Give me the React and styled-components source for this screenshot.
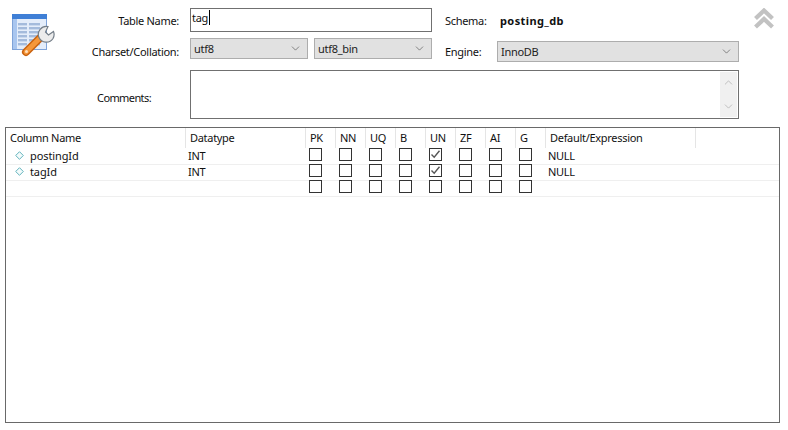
import React from "react";
import styled, { createGlobalStyle } from "styled-components";
import { ChevronDown, ChevronUp } from "lucide-react";

const GlobalStyle = createGlobalStyle`
  html, body {
    margin: 0;
    padding: 0;
    background: #fff;
    font-family: "Noto Sans", Tahoma, sans-serif;
    font-size: 11px;
    letter-spacing: -0.3px;
    color: #111;
  }
`;

const Page = styled.div`
  width: 788px;
  height: 430px;
  box-sizing: border-box;
  padding: 8px 8px 7px 5px;
  display: flex;
  flex-direction: column;
  overflow: hidden;
`;

const Top = styled.div`
  display: grid;
  grid-template-columns: 52px 133px 242px 65px 242px 1fr;
  grid-template-rows: 24px 26px 49px;
  row-gap: 6px;
  height: 111px;
  margin-bottom: 8px;
`;

const IconCell = styled.div`
  grid-row: 1 / span 2;
  padding: 5px 0 0 6px;
`;

const Label = styled.div`
  display: flex;
  align-items: center;
  justify-content: ${(p) => (p.$left ? "flex-start" : "flex-end")};
  padding: ${(p) => (p.$left ? "0 0 0 13px" : "0 11px 0 0")};
  grid-column: ${(p) => p.$col || "auto"};
  white-space: nowrap;
`;

const CommentsLabel = styled(Label)`
  padding: 5px 39px 0 0;
  letter-spacing: -0.6px;
`;

const NameInput = styled.div`
  box-sizing: border-box;
  border: 1px solid #707070;
  height: 24px;
  padding: 1px 0 0 1px;
  line-height: 15px;
  display: flex;
  align-items: flex-start;
`;

const Caret = styled.span`
  width: 1px;
  height: 15px;
  background: #000;
  margin-left: 1px;
`;

const SelectPair = styled.div`
  display: grid;
  grid-template-columns: 118px 118px;
  column-gap: 6px;
  align-items: start;
`;

const SelectBox = styled.div`
  box-sizing: border-box;
  height: 21px;
  border: 1px solid #adadad;
  background: #e1e1e1;
  display: flex;
  align-items: center;
  justify-content: space-between;
  padding: 0 5px 0 3px;
  margin-top: ${(p) => (p.$low ? "3px" : "0")};
  color: #222;
`;

const SchemaValue = styled.div`
  display: flex;
  align-items: center;
  padding-left: 3px;
  font-weight: 700;
  letter-spacing: 0.4px;
`;

const Comments = styled.div`
  grid-column: 3 / span 3;
  box-sizing: border-box;
  border: 1px solid #707070;
  display: flex;
  justify-content: flex-end;
  padding: 1px;
`;

const Scrollbar = styled.div`
  width: 17px;
  background: #f0f0f0;
  display: flex;
  flex-direction: column;
  justify-content: space-between;
  align-items: center;
  padding: 4px 0;
  color: #a6a6a6;
`;

const Collapse = styled.div`
  grid-row: 1;
  grid-column: 6;
  display: flex;
  justify-content: flex-end;
  padding-right: 5px;
`;

const Table = styled.div`
  flex: 1;
  border: 1px solid #696969;
  box-sizing: border-box;
`;

const Row = styled.div`
  display: grid;
  grid-template-columns: 180px 120px repeat(8, 30px) 150px;
  height: ${(p) => (p.$head ? "20px" : "16px")};
  box-shadow: ${(p) => (p.$head ? "none" : "0 1px 0 #efefef")};
`;

const HeadCell = styled.div`
  border-right: 1px solid #e5e5e5;
  padding: 2px 0 0 ${(p) => p.$pad || 4}px;
  white-space: nowrap;
`;

const NameCell = styled.div`
  display: flex;
  align-items: center;
  gap: 6px;
  padding: 0 0 2px 9px;
  letter-spacing: -0.1px;
`;

const TextCell = styled.div`
  display: flex;
  align-items: center;
  padding: 0 0 2px 2px;
`;

const CheckCell = styled.div`
  padding-left: 3px;
`;

const Box = styled.div`
  width: 13px;
  height: 13px;
  box-sizing: border-box;
  border: 1px solid #333;
  background: #fff;
  display: flex;
`;

const TableIcon = () => (
  <svg width="44" height="44" viewBox="0 0 44 44">
    <rect x="1.5" y="1.5" width="34" height="35" fill="#e4edfa" stroke="#7fa3d8" />
    <rect x="1" y="1" width="35" height="5" fill="#3f7fd6" />
    <rect x="2" y="6" width="4" height="30" fill="#a9c6ef" />
    {[10, 14, 18, 22, 26, 30].map((y) => (
      <g key={y}>
        <rect x="7" y={y} width="9" height="2.4" fill="#a4bbdc" />
        <rect x="18" y={y} width="11" height="2.4" fill="#a4bbdc" />
      </g>
    ))}
    <path d="M15 39 L31 23" stroke="#c9620f" strokeWidth="8" strokeLinecap="round" />
    <path d="M15 39 L31 23" stroke="#f5973a" strokeWidth="5" strokeLinecap="round" />
    <circle cx="15.5" cy="38.5" r="1.5" fill="#ffe0bd" />
    <path d="M37 13.5 a8 8 0 0 0 -9 11 a8 8 0 0 0 14 1 a8 8 0 0 0 .5 -7 l-5 3.5 l-3 -3 z" fill="#ececec" stroke="#747e88" strokeWidth="1.2" />
  </svg>
);

const DoubleChevron = () => (
  <svg width="22" height="22" viewBox="0 0 22 22" fill="none" stroke="#c2c2c2" strokeWidth="4.2">
    <path d="M2.5 10.5 L11 2.5 L19.5 10.5" />
    <path d="M2.5 19 L11 11 L19.5 19" />
  </svg>
);

const Diamond = () => (
  <svg width="9" height="9" viewBox="0 0 9 9">
    <path d="M4.5 .7 L8.3 4.5 L4.5 8.3 L.7 4.5 Z" fill="#f3fbfb" stroke="#62b3bd" />
  </svg>
);

const Tick = () => (
  <svg width="11" height="11" viewBox="0 0 11 11" fill="none" stroke="#555" strokeWidth="1.4">
    <path d="M1.5 5.5 L4.2 8.2 L9.5 1.8" />
  </svg>
);

const heads = ["PK", "NN", "UQ", "B", "UN", "ZF", "AI", "G"];

const rows = [
  { name: "postingId", type: "INT", def: "NULL", un: true },
  { name: "tagId", type: "INT", def: "NULL", un: true },
  { name: "", type: "", def: "", un: false },
];

const Select = ({ value, low }) => (
  <SelectBox $low={low}>
    {value}
    <ChevronDown size={13} strokeWidth={1} color="#333" />
  </SelectBox>
);

export default function App() {
  return (
    <Page>
      <GlobalStyle />
      <Top>
        <IconCell>
          <TableIcon />
        </IconCell>
        <Label $col="2">Table Name:</Label>
        <NameInput>
          tag
          <Caret />
        </NameInput>
        <Label $left>Schema:</Label>
        <SchemaValue>posting_db</SchemaValue>
        <Collapse>
          <DoubleChevron />
        </Collapse>

        <Label $col="2">Charset/Collation:</Label>
        <SelectPair>
          <Select value="utf8" />
          <Select value="utf8_bin" />
        </SelectPair>
        <Label $left>Engine:</Label>
        <Select value="InnoDB" low />

        <CommentsLabel $col="1 / span 2">Comments:</CommentsLabel>
        <Comments>
          <Scrollbar>
            <ChevronUp size={13} strokeWidth={1.2} />
            <ChevronDown size={13} strokeWidth={1.2} />
          </Scrollbar>
        </Comments>
      </Top>
      <Table>
        <Row $head>
          <HeadCell>Column Name</HeadCell>
          <HeadCell $pad={4}>Datatype</HeadCell>
          {heads.map((h) => (
            <HeadCell key={h}>{h}</HeadCell>
          ))}
          <HeadCell $pad={4}>Default/Expression</HeadCell>
        </Row>
        {rows.map((r, i) => (
          <Row key={i}>
            <NameCell>
              {r.name && <Diamond />}
              {r.name}
            </NameCell>
            <TextCell>{r.type}</TextCell>
            {heads.map((h) => (
              <CheckCell key={h}>
                <Box>{h === "UN" && r.un && <Tick />}</Box>
              </CheckCell>
            ))}
            <TextCell>{r.def}</TextCell>
          </Row>
        ))}
      </Table>
    </Page>
  );
}
